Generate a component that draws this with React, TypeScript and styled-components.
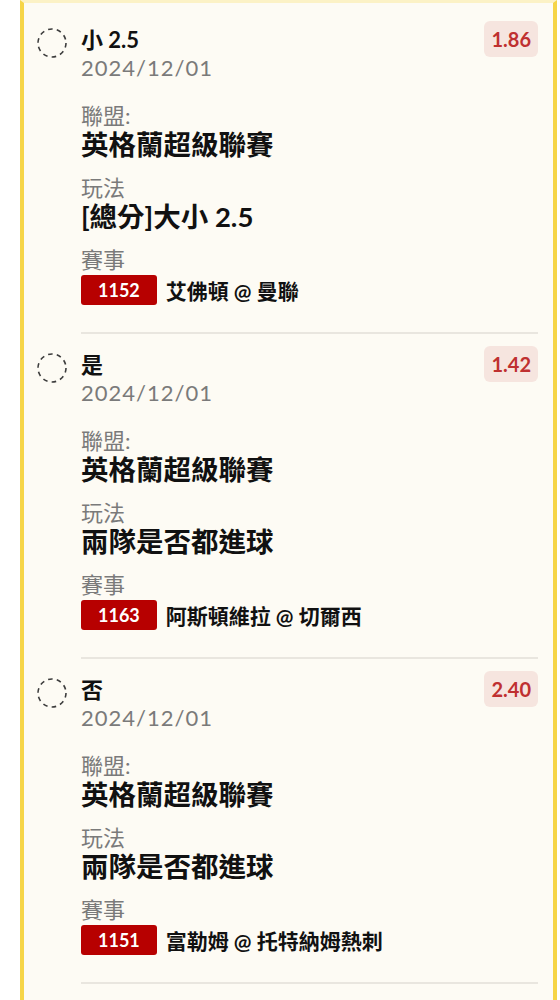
import React from "react";
import styled, { createGlobalStyle } from "styled-components";

interface Bet {
  id: number;
  pick: string;
  date: string;
  odds: string;
  league: string;
  market: string;
  matchNo: string;
  match: string;
}

const bets: Bet[] = [
  {
    id: 1,
    pick: "小 2.5",
    date: "2024/12/01",
    odds: "1.86",
    league: "英格蘭超級聯賽",
    market: "[總分]大小 2.5",
    matchNo: "1152",
    match: "艾佛頓 @ 曼聯",
  },
  {
    id: 2,
    pick: "是",
    date: "2024/12/01",
    odds: "1.42",
    league: "英格蘭超級聯賽",
    market: "兩隊是否都進球",
    matchNo: "1163",
    match: "阿斯頓維拉 @ 切爾西",
  },
  {
    id: 3,
    pick: "否",
    date: "2024/12/01",
    odds: "2.40",
    league: "英格蘭超級聯賽",
    market: "兩隊是否都進球",
    matchNo: "1151",
    match: "富勒姆 @ 托特納姆熱刺",
  },
];

const GlobalStyle = createGlobalStyle`
  html, body {
    margin: 0;
    padding: 0;
    background: #ffffff;
  }
  body {
    font-family: Lato, "Noto Sans CJK TC", sans-serif;
    color: #151515;
  }
`;

const Frame = styled.div`
  margin-left: 20px;
  width: 537px;
  height: 1000px;
  box-sizing: border-box;
  overflow: hidden;
  background: #fdfbf4;
  border-left: 4px solid #f6d548;
  border-right: 4px solid #f6d548;
  border-top: 3px solid #fcf2c6;
  padding-top: 6px;
`;

const Item = styled.div`
  display: flex;
  align-items: flex-start;
  gap: 14px;
  padding: 12px 15px 0 13px;
`;

const Radio = styled.svg`
  flex: 0 0 auto;
  margin-top: 7px;
`;

const Content = styled.div`
  flex: 1;
  min-width: 0;
  padding-bottom: 27px;
  border-bottom: 2px solid #e9e6df;
`;

const Header = styled.div`
  display: flex;
  justify-content: space-between;
  align-items: flex-start;
`;

const Pick = styled.div`
  font-size: 22px;
  font-weight: 700;
  line-height: 37px;
  color: #111;
`;

const DateText = styled.div`
  font-size: 22px;
  line-height: 20px;
  color: #7a7a7a;
  letter-spacing: 1px;
`;

const Odds = styled.div`
  height: 36px;
  padding: 0 7px;
  display: flex;
  align-items: center;
  border-radius: 6px;
  background: #f6e5df;
  color: #bf3030;
  font-size: 20px;
  font-weight: 700;
`;

const Details = styled.div`
  margin-top: 24px;
  display: flex;
  flex-direction: column;
  gap: 14px;
`;

const Field = styled.div`
  display: flex;
  flex-direction: column;
`;

const Label = styled.div`
  font-size: 22px;
  line-height: 28px;
  color: #7a7a7a;
`;

const Value = styled.div`
  font-size: 27.5px;
  font-weight: 700;
  line-height: 30px;
  color: #111;
`;

const MatchRow = styled.div`
  display: flex;
  align-items: center;
  gap: 9px;
  margin-top: 1px;
`;

const MatchNo = styled.span`
  height: 30px;
  padding: 0 17px;
  display: inline-flex;
  align-items: center;
  border-radius: 3px;
  background: #b70000;
  color: #fff;
  font-size: 18px;
  font-weight: 700;
`;

const MatchName = styled.span`
  font-size: 21px;
  font-weight: 700;
  color: #111;
`;

const DashedCircle = () => (
  <Radio width="30" height="30" viewBox="0 0 30 30">
    <circle
      cx="15"
      cy="15"
      r="14"
      fill="none"
      stroke="#3c3c3c"
      strokeWidth="1.6"
      strokeDasharray="4.6 4.2"
    />
  </Radio>
);

const App: React.FC = () => {
  return (
    <>
      <GlobalStyle />
      <Frame>
        {bets.map((bet) => (
          <Item key={bet.id}>
            <DashedCircle />
            <Content>
              <Header>
                <div>
                  <Pick>{bet.pick}</Pick>
                  <DateText>{bet.date}</DateText>
                </div>
                <Odds>{bet.odds}</Odds>
              </Header>
              <Details>
                <Field>
                  <Label>聯盟:</Label>
                  <Value>{bet.league}</Value>
                </Field>
                <Field>
                  <Label>玩法</Label>
                  <Value>{bet.market}</Value>
                </Field>
                <Field>
                  <Label>賽事</Label>
                  <MatchRow>
                    <MatchNo>{bet.matchNo}</MatchNo>
                    <MatchName>{bet.match}</MatchName>
                  </MatchRow>
                </Field>
              </Details>
            </Content>
          </Item>
        ))}
      </Frame>
    </>
  );
};

export default App;
